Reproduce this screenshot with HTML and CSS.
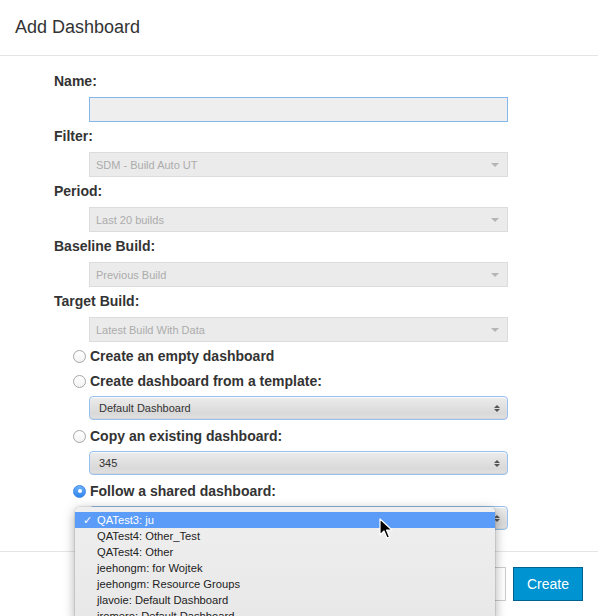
FILE: index.html
```html
<!DOCTYPE html>
<html>
<head>
<meta charset="utf-8">
<link rel="stylesheet" href="styles.css">
</head>
<body>
<div class="modal">
  <div class="modal-header">
    <h4 class="modal-title">Add Dashboard</h4>
  </div>
  <div class="modal-body">
    <div class="field-label">Name:</div>
    <div class="control text-input"></div>

    <div class="field-label">Filter:</div>
    <div class="control dis-select"><span>SDM - Build Auto UT</span><i class="caret"></i></div>

    <div class="field-label">Period:</div>
    <div class="control dis-select"><span>Last 20 builds</span><i class="caret"></i></div>

    <div class="field-label">Baseline Build:</div>
    <div class="control dis-select"><span>Previous Build</span><i class="caret"></i></div>

    <div class="field-label">Target Build:</div>
    <div class="control dis-select"><span>Latest Build With Data</span><i class="caret"></i></div>

    <div class="radio-row first"><span class="radio"></span><span>Create an empty dashboard</span></div>
    <div class="radio-row"><span class="radio"></span><span>Create dashboard from a template:</span></div>
    <div class="control mac-select"><span>Default Dashboard</span><i class="updown"><b class="up"></b><b class="down"></b></i></div>

    <div class="radio-row"><span class="radio"></span><span>Copy an existing dashboard:</span></div>
    <div class="control mac-select"><span>345</span><i class="updown"><b class="up"></b><b class="down"></b></i></div>

    <div class="radio-row"><span class="radio checked"></span><span>Follow a shared dashboard:</span></div>
    <div class="control mac-select last"><span></span><i class="updown"><b class="up"></b><b class="down"></b></i></div>
  </div>
  <div class="modal-footer">
    <button class="btn btn-default">Cancel</button>
    <button class="btn btn-primary">Create</button>
  </div>
</div>

<div class="popup">
  <div class="opt selected"><span class="check">✓</span><span>QATest3: ju</span></div>
  <div class="opt"><span class="check"></span><span>QATest4: Other_Test</span></div>
  <div class="opt"><span class="check"></span><span>QATest4: Other</span></div>
  <div class="opt"><span class="check"></span><span>jeehongm: for Wojtek</span></div>
  <div class="opt"><span class="check"></span><span>jeehongm: Resource Groups</span></div>
  <div class="opt"><span class="check"></span><span>jlavoie: Default Dashboard</span></div>
  <div class="opt"><span class="check"></span><span>jromero: Default Dashboard</span></div>
</div>

<svg class="cursor" width="14" height="22" viewBox="0 0 14 22">
  <path d="M1 1 L1 17 L5 13 L8 20 L10.5 19 L7.5 12 L13 12 Z" fill="#000" stroke="#fff" stroke-width="1.2" stroke-linejoin="round"/>
</svg>
</body>
</html>
```

FILE: styles.css
```css
html, body {
  margin: 0;
  padding: 0;
  overflow: hidden;
}
body {
  width: 598px;
  height: 616px;
  background: #fff;
  font-family: "Liberation Sans", Arial, Helvetica, sans-serif;
  color: #333;
  position: relative;
}
.modal-header {
  height: 38px;
  padding: 17px 15px 0;
  border-bottom: 1px solid #e5e5e5;
}
.modal-title {
  margin: 0;
  font-size: 18px;
  font-weight: normal;
  line-height: 20px;
  color: #333;
}
.modal-body {
  padding: 15px 0 21px 54px;
}
.field-label {
  height: 20px;
  line-height: 20px;
  font-size: 14px;
  font-weight: bold;
  color: #333;
  margin-bottom: 6px;
}
.control {
  margin-left: 35px;
  width: 419px;
  height: 25px;
  box-sizing: border-box;
  margin-bottom: 4px;
  font-size: 11px;
  display: flex;
  align-items: center;
  justify-content: space-between;
}
.text-input {
  background: #eee;
  border: 1px solid #86b7ea;
}
.dis-select {
  background: #ebebeb;
  border: 1px solid #dcdcdc;
  color: #ababab;
  padding: 0 8px 0 6px;
}
.caret {
  width: 0;
  height: 0;
  border-left: 4px solid transparent;
  border-right: 4px solid transparent;
  border-top: 4px solid #b5b5b5;
}
.radio-row {
  height: 20px;
  margin-left: 19px;
  display: flex;
  align-items: center;
  gap: 4px;
  font-size: 14px;
  font-weight: bold;
  color: #333;
  margin-bottom: 5px;
}
.radio-row.first {
  margin-top: 2px;
}
.radio {
  width: 13px;
  height: 13px;
  box-sizing: border-box;
  border-radius: 50%;
  border: 1px solid #a6a6a6;
  background: linear-gradient(#fff, #f3f3f3);
  position: relative;
}
.radio.checked {
  border: 1px solid #3b87e6;
  background: linear-gradient(#6db1fa, #2f84ec);
}
.radio.checked::after {
  content: "";
  position: absolute;
  left: 3.5px;
  top: 3.5px;
  width: 4px;
  height: 4px;
  border-radius: 50%;
  background: #fff;
}
.mac-select {
  height: 24px;
  margin-bottom: 6px;
  border: 1px solid #96c1ec;
  border-radius: 4px;
  background: linear-gradient(#ececec 0%, #e3e3e3 35%, #d9d9d9 75%, #e2e2e2 100%);
  box-shadow: inset 0 1px 1px rgba(255,255,255,0.8), inset 0 -1px 1px rgba(0,0,0,0.06);
  color: #333;
  padding: 0 7px 0 9px;
}
.mac-select.last {
  margin-bottom: 0;
}
.updown {
  display: flex;
  flex-direction: column;
  gap: 1px;
}
.updown b {
  display: block;
  width: 0;
  height: 0;
  border-left: 3px solid transparent;
  border-right: 3px solid transparent;
}
.updown .up { border-bottom: 3px solid #555; }
.updown .down { border-top: 3px solid #555; }
.modal-footer {
  border-top: 1px solid #e5e5e5;
  padding: 15px;
  display: flex;
  justify-content: flex-end;
  gap: 7px;
}
.btn {
  font-family: "Liberation Sans", Arial, sans-serif;
  font-size: 14px;
  line-height: 18px;
  padding: 7px 13px;
  margin: 0;
  border-radius: 0;
}
.btn-default {
  background: #fff;
  border: 1px solid #ccc;
  color: #333;
}
.btn-primary {
  background: #0093d1;
  border: 1px solid #00608e;
  color: #fff;
}
.popup {
  position: absolute;
  left: 75px;
  top: 507px;
  width: 420px;
  height: 112px;
  overflow: hidden;
  box-sizing: border-box;
  padding-top: 5px;
  background: linear-gradient(#efefef, #e8e8e8);
  border-radius: 5px 5px 0 0;
  box-shadow: 0 3px 12px rgba(0,0,0,0.35), 0 0 0 1px rgba(0,0,0,0.08);
  font-family: "Liberation Sans", Helvetica, Arial, sans-serif;
  font-size: 11.2px;
  color: #222;
}
.opt {
  height: 16px;
  line-height: 16px;
  padding-left: 8px;
  display: flex;
}
.opt.selected {
  background: #5b9cf8;
  color: #fff;
}
.check {
  width: 14px;
  flex: none;
}
.cursor {
  position: absolute;
  left: 379px;
  top: 518px;
}
```
